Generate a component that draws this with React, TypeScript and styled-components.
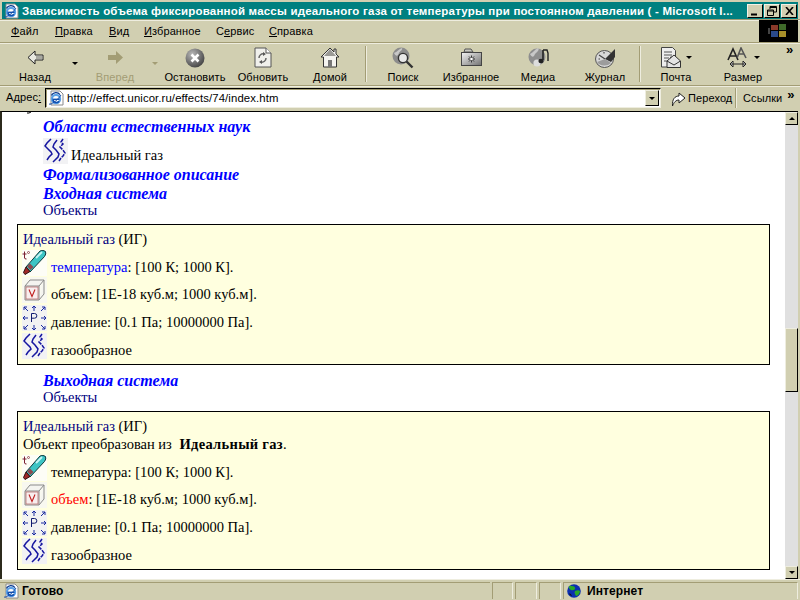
import React from 'react';
import styled, { createGlobalStyle } from 'styled-components';

const GlobalStyle = createGlobalStyle`
  html, body {
    margin: 0;
    padding: 0;
    width: 800px;
    height: 600px;
    overflow: hidden;
    background: #d1cfb1;
  }
`;

const Win = styled.div`
  width: 800px;
  height: 600px;
  display: flex;
  flex-direction: column;
  background: #d1cfb1;
  font-family: "Liberation Sans", Arial, sans-serif;
  font-size: 11px;
  letter-spacing: 0.1px;
  color: #000;
  overflow: hidden;
`;

// title bar
const TitleBar = styled.div`
  height: 17px;
  margin: 2px 2px 0;
  flex: none;
  display: flex;
  align-items: center;
  background: #008080;
  color: #fff;
`;

const TitleIcon = styled.span`
  width: 16px;
  height: 16px;
  margin: 0 3px 0 1px;
  flex: none;
  display: flex;
`;

const TitleText = styled.div`
  flex: 1;
  font-weight: bold;
  font-size: 11.5px;
  letter-spacing: 0.2px;
  white-space: nowrap;
`;

const WinButtons = styled.div`
  display: flex;
  margin-right: 1px;
`;

const WinButton = styled.div<{ $gap?: number }>`
  width: 16px;
  height: 14px;
  margin-left: ${p => p.$gap ?? 0}px;
  display: flex;
  align-items: center;
  justify-content: center;
  box-sizing: border-box;
  background: #d1cfb1;
  border: 1px solid;
  border-color: #f2f1e6 #000 #000 #f2f1e6;
`;

// menu
const MenuRow = styled.div`
  height: 24px;
  flex: none;
  display: flex;
  align-items: stretch;
  box-sizing: border-box;
  border-top: 1px solid #a39d75;
  border-bottom: 1px solid #a39d75;
  box-shadow: inset 0 1px 0 #eeeddf;
`;

const MenuItems = styled.div`
  flex: 1;
  display: flex;
  align-items: center;
  padding-left: 11px;
`;

const MenuItem = styled.span<{ $w: number }>`
  width: ${p => p.$w}px;
  white-space: nowrap;
`;

const LogoBox = styled.div`
  width: 39px;
  background: #000;
  display: flex;
  align-items: center;
  justify-content: center;
  margin-right: 2px;
`;

// toolbar
const Toolbar = styled.div`
  height: 43px;
  flex: none;
  display: flex;
  box-sizing: border-box;
  border-bottom: 1px solid #a39d75;
  box-shadow: inset 0 1px 0 #eeeddf;
`;

const ToolButton = styled.div<{ $w: number; $off?: boolean }>`
  width: ${p => p.$w}px;
  flex: none;
  display: flex;
  flex-direction: column;
  align-items: center;
  padding-top: 3px;
  color: ${p => (p.$off ? '#a39d75' : '#000')};
  white-space: nowrap;
`;

const ToolIcon = styled.div`
  height: 23px;
  display: flex;
  align-items: center;
  justify-content: center;
  gap: 5px;
  margin-bottom: 2px;
`;

const CaretSlot = styled.div<{ $off?: boolean }>`
  width: 10px;
  flex: none;
  display: flex;
  justify-content: center;
  padding-top: 19px;
  box-sizing: border-box;
  color: ${p => (p.$off ? '#a39d75' : '#000')};
`;

const Caret = styled.span<{ $color?: string }>`
  width: 0;
  height: 0;
  border-left: 3px solid transparent;
  border-right: 3px solid transparent;
  border-top: 3px solid ${p => p.$color ?? 'currentColor'};
`;

const ToolSep = styled.div`
  width: 2px;
  height: 36px;
  margin: 3px 1px 0 1px;
  flex: none;
  background: linear-gradient(to right, #a39d75 50%, #eeeddf 50%);
`;

const MoreChevrons = styled.span<{ $left: number }>`
  font-size: 13px;
  font-weight: bold;
  line-height: 10px;
  margin: 2px 0 0 ${p => p.$left}px;
  align-self: flex-start;
`;

// address
const AddressRow = styled.div`
  height: 25px;
  flex: none;
  display: flex;
  align-items: flex-start;
  box-sizing: border-box;
  padding-top: 2px;
  border-bottom: 1px solid #d1cfb1;
  box-shadow: inset 0 1px 0 #eeeddf;
`;

const AddressLabel = styled.div`
  width: 45px;
  padding: 3px 0 0 6px;
  box-sizing: border-box;
  flex: none;
`;

const UrlBox = styled.div`
  width: 616px;
  height: 20px;
  flex: none;
  display: flex;
  align-items: center;
  box-sizing: border-box;
  background: #fff;
  border: 1px solid;
  border-color: #000 #eeeddf #eeeddf #000;
  box-shadow: inset 1px 1px 0 #a39d75;
`;

const UrlIcon = styled.span`
  width: 16px;
  height: 16px;
  margin: 0 3px 0 2px;
  display: flex;
  flex: none;
`;

const UrlText = styled.div`
  flex: 1;
  font-size: 11.35px;
  white-space: nowrap;
`;

const ComboButton = styled.div`
  width: 14px;
  height: 16px;
  margin-right: 1px;
  flex: none;
  display: flex;
  align-items: center;
  justify-content: center;
  box-sizing: border-box;
  background: #d1cfb1;
  border: 1px solid;
  border-color: #eeeddf #000 #000 #eeeddf;
  color: #000;
`;

const GoButton = styled.div`
  width: 71px;
  height: 20px;
  flex: none;
  margin-left: 4px;
  display: flex;
  align-items: center;
  gap: 2px;
  padding-left: 6px;
  box-sizing: border-box;
  border-right: 1px solid #a39d75;
`;

const LinksLabel = styled.div`
  flex: 1;
  height: 20px;
  display: flex;
  align-items: center;
  padding-left: 6px;
  border-left: 1px solid #eeeddf;
`;

// document area
const Main = styled.div`
  height: 468px;
  flex: none;
  display: flex;
  box-sizing: border-box;
  border-top: 1px solid #000;
  border-left: 2px solid #2c2a1c;
  margin-right: 2px;
  background: #fff;
`;

const Page = styled.div`
  flex: 1;
  overflow: hidden;
  background: #fff;
  font-family: "Liberation Serif", "Times New Roman", serif;
  font-size: 14.5px;
  letter-spacing: 0;
  color: #000;
`;

const ClippedTail = styled.svg`
  display: block;
  margin-left: 24px;
`;

const Heading = styled.div<{ $top?: number }>`
  margin: ${p => p.$top ?? 0}px 0 0 41px;
  height: 19px;
  line-height: 19px;
  color: #0000ff;
  font-size: 16px;
  font-weight: bold;
  font-style: italic;
  white-space: nowrap;
`;

const Plain = styled.div<{ $top: number }>`
  margin: ${p => p.$top}px 0 0 41px;
  height: 17px;
  line-height: 17px;
  color: #000080;
`;

const ClassRow = styled.div`
  margin-left: 41px;
  height: 28px;
  display: flex;
  align-items: flex-end;
  gap: 3px;
`;

const ClassText = styled.span`
  height: 17px;
  line-height: 17px;
`;

const ObjectBox = styled.div<{ $top: number; $h: number }>`
  margin: ${p => p.$top}px 0 0 15px;
  width: 753px;
  height: ${p => p.$h}px;
  box-sizing: border-box;
  padding: 5px 5px 0;
  background: #ffffdf;
  border: 1px solid #000;
`;

const BoxLine = styled.div`
  height: 18px;
  line-height: 18px;
  white-space: nowrap;
`;

const Navy = styled.span`
  color: #000080;
`;

const SourceName = styled.b`
  margin-left: 4px;
  letter-spacing: 0.3px;
`;

const ParamRow = styled.div`
  height: 27.67px;
  display: flex;
  align-items: flex-end;
  gap: 4px;
  margin-left: -1px;
  white-space: nowrap;
`;

const ParamIcon = styled.span`
  width: 25px;
  height: 26px;
  flex: none;
  display: flex;
`;

const ParamText = styled.span`
  height: 17px;
  line-height: 17px;
`;

const ParamName = styled.span<{ $color?: string }>`
  color: ${p => p.$color ?? 'inherit'};
`;

// scrollbar
const Scrollbar = styled.div`
  width: 13px;
  flex: none;
  display: flex;
  flex-direction: column;
  background: #e0e0e0;
`;

const ScrollButton = styled.div`
  height: 13px;
  flex: none;
  display: flex;
  align-items: center;
  justify-content: center;
  box-sizing: border-box;
  background: #d1cfb1;
  border: 1px solid;
  border-color: #eeeddf #000 #000 #eeeddf;
`;

const ScrollUp = styled.span`
  width: 0;
  height: 0;
  border-left: 3px solid transparent;
  border-right: 3px solid transparent;
  border-bottom: 3px solid #000;
`;

const ScrollTrack = styled.div<{ $flex: number }>`
  flex: ${p => p.$flex};
`;

const ScrollThumb = styled.div`
  height: 64px;
  flex: none;
  box-sizing: border-box;
  background: #d1cfb1;
  border: 1px solid;
  border-color: #eeeddf #000 #000 #eeeddf;
`;

// status bar
const StatusBar = styled.div`
  flex: 1;
  display: flex;
  align-items: stretch;
  box-sizing: border-box;
  padding: 2px 2px 2px 0;
  border-top: 1px solid #eeeddf;
  font-size: 12px;
  font-weight: bold;
`;

const StatusMain = styled.div`
  width: 490px;
  flex: none;
  display: flex;
  align-items: center;
  gap: 3px;
  padding-left: 3px;
  box-sizing: border-box;
  border-top: 1px solid #a39d75;
`;

const StatusCell = styled.div<{ $w: number; $grow?: boolean }>`
  width: ${p => p.$w}px;
  flex: ${p => (p.$grow ? 1 : 'none')};
  margin-left: 2px;
  display: flex;
  align-items: center;
  gap: 6px;
  padding-left: 3px;
  box-sizing: border-box;
  border-top: 1px solid #a39d75;
  border-left: 1px solid #a39d75;
  border-right: 1px solid #eeeddf;
`;

// --- drawings ---
const Svg = styled.svg`
  display: block;
  flex: none;
`;

const IeIcon = () => (
  <Svg width="16" height="16" viewBox="0 0 16 16">
    <path d="M3 1h9l3 3v11H3z" fill="#fff" stroke="#8a8a8a" />
    <circle cx="8" cy="9" r="5.2" fill="#5aa0e6" />
    <circle cx="8" cy="9" r="3" fill="#fff" />
    <path d="M4.5 8.6h7v1.4h-7z" fill="#1050b0" />
    <path d="M11 11.2A3.4 3.4 0 0 1 5 10" fill="none" stroke="#1050b0" strokeWidth="1.6" />
    <path d="M3.4 5.4A5.2 5.2 0 0 1 12 4.6" fill="none" stroke="#0a3a90" strokeWidth="1.2" />
    <path d="M1 14c2 1 8-3 12-9" fill="none" stroke="#1a4fa8" strokeWidth="1" />
  </Svg>
);

const Flag = () => (
  <Svg width="24" height="18" viewBox="0 0 24 18">
    <rect x="4" y="3" width="7" height="5" fill="#8a3a2a" />
    <rect x="12" y="2" width="7" height="6" fill="#3f6a2a" />
    <rect x="4" y="9" width="7" height="6" fill="#2a4a8a" />
    <rect x="12" y="9" width="7" height="6" fill="#a8902a" />
    <rect x="1" y="6" width="2" height="6" fill="#444" />
  </Svg>
);

const BackIcon = () => (
  <Svg width="17" height="15" viewBox="0 0 17 15">
    <path d="M8 1L1 7.5 8 14v-4h8V5H8z" fill="#e8e8e0" stroke="#222" />
    <path d="M9 6h6v3H9z" fill="#a8a8a0" />
  </Svg>
);

const ForwardIcon = () => (
  <Svg width="17" height="15" viewBox="0 0 17 15">
    <path d="M9 1l7 6.5L9 14v-4H1V5h8z" fill="#a39d75" />
  </Svg>
);

const StopIcon = () => (
  <Svg width="20" height="20" viewBox="0 0 20 20">
    <defs>
      <radialGradient id="stopg" cx="35%" cy="30%" r="80%">
        <stop offset="0" stopColor="#b8b8b8" />
        <stop offset="1" stopColor="#3c3c3c" />
      </radialGradient>
    </defs>
    <circle cx="10" cy="10" r="9.5" fill="url(#stopg)" />
    <path d="M6.5 6.5l7 7M13.5 6.5l-7 7" stroke="#fff" strokeWidth="2.6" />
  </Svg>
);

const RefreshIcon = () => (
  <Svg width="18" height="21" viewBox="0 0 18 21">
    <path d="M1 1h11l5 5v14H1z" fill="#f0f0ec" stroke="#555" />
    <path d="M12 1v5h5" fill="#fff" stroke="#555" />
    <path d="M5 11a4 4 0 0 1 5-4" fill="none" stroke="#666" strokeWidth="1.5" />
    <path d="M9 5l3 2-3 2z" fill="#555" />
    <path d="M12 11a4 4 0 0 1-5 4" fill="none" stroke="#666" strokeWidth="1.5" />
    <path d="M8 13l-3 2 3 2z" fill="#555" />
  </Svg>
);

const HomeIcon = () => (
  <Svg width="20" height="21" viewBox="0 0 20 21">
    <path d="M10 1L1 10h2.5v10h13V10H19l-3-3V2h-2v3z" fill="#f4f4f0" stroke="#333" />
    <path d="M10 2l6 7H4z" fill="#9a9a96" />
    <rect x="8" y="13" width="4" height="7" fill="#777" />
  </Svg>
);

const SearchIcon = () => (
  <Svg width="22" height="22" viewBox="0 0 22 22">
    <circle cx="9" cy="9" r="8.5" fill="#8c8c8c" />
    <path d="M2 6c3-1 5-4 8-5 1 2-2 3-3 5-1 3-3 4-5 0zM14 10l3 4-4 2z" fill="#c8c8c8" />
    <circle cx="11" cy="11" r="4.6" fill="#e8e8e8" stroke="#333" strokeWidth="1.4" />
    <path d="M14.5 14.5l6 6" stroke="#333" strokeWidth="2.4" />
  </Svg>
);

const FavoritesIcon = () => (
  <Svg width="21" height="19" viewBox="0 0 21 19">
    <defs>
      <linearGradient id="favg" x1="0" y1="0" x2="1" y2="1">
        <stop offset="0" stopColor="#f4f4f4" />
        <stop offset="1" stopColor="#707070" />
      </linearGradient>
    </defs>
    <path d="M3 4l1-3h6l2 3z" fill="#c8c8c0" stroke="#555" />
    <rect x="0.5" y="4.5" width="20" height="13" fill="url(#favg)" stroke="#444" />
    <path d="M10.5 7.500v7M7 11h7M8 8.500l5 5M13 8.500l-5 5" stroke="#333" />
    <circle cx="10.5" cy="11" r="1.3" fill="#fff" />
  </Svg>
);

const MediaIcon = () => (
  <Svg width="21" height="21" viewBox="0 0 21 21">
    <circle cx="9" cy="10" r="8.5" fill="#8e8e8e" />
    <path d="M2 7c3-1 5-5 8-6 2 2-1 4-3 6-1 3-3 4-5 0z" fill="#c8c8c8" />
    <circle cx="9" cy="16" r="3.6" fill="#ddd" />
    <path d="M15 3h4l1 3v8" fill="none" stroke="#222" strokeWidth="1.4" />
    <path d="M15 3v10" stroke="#222" strokeWidth="1.6" />
    <ellipse cx="13" cy="14" rx="2.6" ry="2.2" fill="#222" />
  </Svg>
);

const JournalIcon = () => (
  <Svg width="21" height="20" viewBox="0 0 21 20">
    <ellipse cx="9.5" cy="11" rx="9" ry="8.5" fill="#d8d8d8" stroke="#555" />
    <path d="M10 11L20 1v8l-4 5z" fill="#333" />
    <path d="M10 11L4 7M9 4v1.5M3.5 11H5M9 17v-1.5" stroke="#444" strokeWidth="1.2" />
    <path d="M2 14a9 8 0 0 0 14 1l-6-4z" fill="#9c9c9c" />
  </Svg>
);

const MailIcon = () => (
  <Svg width="20" height="21" viewBox="0 0 20 21">
    <path d="M0.5 0.5h11l3 3V10h-5v10h-9z" fill="#eee" stroke="#444" />
    <path d="M3 5h8M3 8h8M3 11h5M3 14h4" stroke="#555" />
    <path d="M6 14l7-6 6.5 6v6.5H6z" fill="#e4e4e4" stroke="#333" />
    <path d="M6 14l7 4 6.5-4" fill="none" stroke="#333" />
  </Svg>
);

const SizeIcon = () => (
  <Svg width="22" height="21" viewBox="0 0 22 21">
    <path d="M1 13L6 2l5 11M3 9h6" fill="none" stroke="#222" strokeWidth="1.6" />
    <path d="M10 11l4-10 5 10M12 7h5" fill="none" stroke="#555" strokeWidth="1.6" />
    <path d="M3 17h16M3 17l3-3v6zM19 17l-3-3v6z" fill="#fff" stroke="#222" />
  </Svg>
);

const GoIcon = () => (
  <Svg width="15" height="17" viewBox="0 0 15 17">
    <path d="M1.5 16C1 9 4 6 8 6V3l6 5-6 5v-3c-3 0-5 2-6.5 6z" fill="#fff" stroke="#222" />
  </Svg>
);

const MiniX = () => (
  <Svg width="9" height="8" viewBox="0 0 9 8">
    <path d="M1 0l7 8M8 0L1 8" stroke="#000" strokeWidth="1.6" fill="none" />
  </Svg>
);

const MiniRestore = () => (
  <Svg width="10" height="10" viewBox="0 0 10 10">
    <path d="M3 3V.5h6.5V6H7M3 1.5h6.5" fill="none" stroke="#000" />
    <path d="M.5 4h6v5.5h-6zM.5 5h6" fill="none" stroke="#000" />
  </Svg>
);

const MiniMin = () => (
  <Svg width="10" height="10" viewBox="0 0 10 10">
    <rect x="1" y="7.5" width="6" height="2" fill="#000" />
  </Svg>
);

const GlobeIcon = () => (
  <Svg width="14" height="14" viewBox="0 0 14 14">
    <circle cx="7" cy="7" r="6.8" fill="#0b2fb0" />
    <path d="M3 1.5c2 1 4 0 5 2S6 7 4 6 1 3 3 1.5zM8 7c2-1 4-1 5 0 0 3-3 5-4 5-1-2-2-3-1-5z" fill="#28a828" />
    <path d="M2 10c1-1 2 0 3 2-1 0-2-1-3-2z" fill="#111" />
  </Svg>
);

const ThermoIcon = () => (
  <Svg width="25" height="26" viewBox="0 0 25 26">
    <rect width="25" height="26" fill="#fdfdf6" />
    <path d="M0.5 4h4M2.5 1.500V8q0 1 2 1" fill="none" stroke="#7a2030" strokeWidth="1" />
    <circle cx="6.5" cy="2.5" r="1" fill="none" stroke="#7a2030" strokeWidth="0.7" />
    <path d="M4 17L18 1q3-1.500 5.500 0.500 1 2.500-1 5L8 22z" fill="#3cc4c4" stroke="#0f3a3a" />
    <path d="M14 8l6-6" stroke="#c4f4f4" strokeWidth="1.8" />
    <path d="M1.500 22.500l2.500-5.500 4 4.500-5 3z" fill="#a02828" stroke="#301010" />
    <path d="M5 16.500l3.500 3.500 3-3-3.500-3.500z" fill="#8c4a50" />
  </Svg>
);

const CubeIcon = () => (
  <Svg width="25" height="26" viewBox="0 0 25 26">
    <rect width="25" height="26" fill="#f8f8f0" />
    <path d="M3 9h14v14H3zM3 9l5-6h14l-5 6M22 3v14l-5 6" fill="#f4f4f0" stroke="#8a8a8a" />
    <rect x="4" y="10" width="12" height="12" fill="#f8eeee" stroke="#b06060" strokeWidth="0.7" />
    <path d="M7 12.5l3 7 3-7" fill="none" stroke="#c02020" strokeWidth="1.1" />
  </Svg>
);

const PressureIcon = () => (
  <Svg width="25" height="26" viewBox="0 0 25 26">
    <rect width="25" height="26" fill="#f2f2f2" />
    <g fill="none" stroke="#1a2aa0" strokeWidth="1">
      <path d="M2 2l4 4M2 2h3M2 2v3" />
      <path d="M12 1v5M12 1l-2 2M12 1l2 2" />
      <path d="M23 2l-4 4M23 2h-3M23 2v3" />
      <path d="M1 13h5M1 13l2-2M1 13l2 2" />
      <path d="M24 13h-5M24 13l-2-2M24 13l-2 2" />
      <path d="M2 24l4-4M2 24h3M2 24v-3" />
      <path d="M12 25v-5M12 25l-2-2M12 25l2-2" />
      <path d="M23 24l-4-4M23 24h-3M23 24v-3" />
      <path d="M9.500 17V8.500h3a2.300 2.300 0 0 1 0 4.700h-3" stroke="#101a70" />
    </g>
  </Svg>
);

const SteamIcon = () => (
  <Svg width="25" height="26" viewBox="0 0 25 26">
    <rect width="25" height="26" fill="#f2f2f4" />
    <g fill="none" stroke="#1616a0" strokeWidth="1.5">
      <path d="M8 1L4 5 2 8l3 3 3 3 1 2-3 3-2 3" />
      <path d="M14 2l-3 4-1 3 3 3 3 4-1 3-3 3-2 2" />
      <path d="M20 1l-2 3 2 2-3 3 3 3 2 3-2 3-2 2-2 3" strokeDasharray="4 1" />
    </g>
  </Svg>
);

const Params = ({ highlight }: { highlight: 'temp' | 'vol' }) => (
  <>
    <ParamRow>
      <ParamIcon><ThermoIcon /></ParamIcon>
      <ParamText>
        <ParamName $color={highlight === 'temp' ? '#0000ff' : undefined}>температура</ParamName>: [100 К; 1000 К].
      </ParamText>
    </ParamRow>
    <ParamRow>
      <ParamIcon><CubeIcon /></ParamIcon>
      <ParamText>
        <ParamName $color={highlight === 'vol' ? '#ff0000' : undefined}>объем</ParamName>: [1E-18 куб.м; 1000 куб.м].
      </ParamText>
    </ParamRow>
    <ParamRow>
      <ParamIcon><PressureIcon /></ParamIcon>
      <ParamText>давление: [0.1 Па; 10000000 Па].</ParamText>
    </ParamRow>
    <ParamRow>
      <ParamIcon><SteamIcon /></ParamIcon>
      <ParamText>газообразное</ParamText>
    </ParamRow>
  </>
);

const menu: [React.ReactNode, number][] = [
  [<><u>Ф</u>айл</>, 44],
  [<><u>П</u>равка</>, 54],
  [<><u>В</u>ид</>, 35],
  [<><u>И</u>збранное</>, 72],
  [<>С<u>е</u>рвис</>, 53],
  [<><u>С</u>правка</>, 60],
];

export default function App() {
  return (
    <Win>
      <GlobalStyle />
      <TitleBar>
        <TitleIcon><IeIcon /></TitleIcon>
        <TitleText>Зависимость объема фиксированной массы идеального газа от температуры при постоянном давлении ( - Microsoft I...</TitleText>
        <WinButtons>
          <WinButton><MiniMin /></WinButton>
          <WinButton $gap={1}><MiniRestore /></WinButton>
          <WinButton $gap={1}><MiniX /></WinButton>
        </WinButtons>
      </TitleBar>

      <MenuRow>
        <MenuItems>
          {menu.map(([label, w], i) => (
            <MenuItem key={i} $w={w}>{label}</MenuItem>
          ))}
        </MenuItems>
        <LogoBox><Flag /></LogoBox>
      </MenuRow>

      <Toolbar>
        <ToolButton $w={70}><ToolIcon><BackIcon /></ToolIcon>Назад</ToolButton>
        <CaretSlot><Caret /></CaretSlot>
        <ToolButton $w={70} $off><ToolIcon><ForwardIcon /></ToolIcon>Вперед</ToolButton>
        <CaretSlot $off><Caret /></CaretSlot>
        <ToolButton $w={70}><ToolIcon><StopIcon /></ToolIcon>Остановить</ToolButton>
        <ToolButton $w={66}><ToolIcon><RefreshIcon /></ToolIcon>Обновить</ToolButton>
        <ToolButton $w={68}><ToolIcon><HomeIcon /></ToolIcon>Домой</ToolButton>
        <ToolSep />
        <ToolButton $w={70}><ToolIcon><SearchIcon /></ToolIcon>Поиск</ToolButton>
        <ToolButton $w={66}><ToolIcon><FavoritesIcon /></ToolIcon>Избранное</ToolButton>
        <ToolButton $w={68}><ToolIcon><MediaIcon /></ToolIcon>Медиа</ToolButton>
        <ToolButton $w={66}><ToolIcon><JournalIcon /></ToolIcon>Журнал</ToolButton>
        <ToolSep />
        <ToolButton $w={68}><ToolIcon><MailIcon /><Caret /></ToolIcon>Почта</ToolButton>
        <ToolButton $w={66}><ToolIcon><SizeIcon /><Caret /></ToolIcon>Размер</ToolButton>
        <MoreChevrons $left={10}>»</MoreChevrons>
      </Toolbar>

      <AddressRow>
        <AddressLabel>Адрес<u>:</u></AddressLabel>
        <UrlBox>
          <UrlIcon><IeIcon /></UrlIcon>
          <UrlText>http://effect.unicor.ru/effects/74/index.htm</UrlText>
          <ComboButton><Caret /></ComboButton>
        </UrlBox>
        <GoButton><GoIcon />Переход</GoButton>
        <LinksLabel>Ссылки<MoreChevrons $left={5}>»</MoreChevrons></LinksLabel>
      </AddressRow>

      <Main>
        <Page>
          <ClippedTail width="6" height="2" viewBox="0 0 6 2">
            <path d="M1 1h2l2-1" fill="none" stroke="#000" />
          </ClippedTail>
          <Heading $top={3}>Области естественных наук</Heading>
          <ClassRow>
            <ParamIcon><SteamIcon /></ParamIcon>
            <ClassText>Идеальный газ</ClassText>
          </ClassRow>
          <Heading $top={1}>Формализованное описание</Heading>
          <Heading>Входная система</Heading>
          <Plain $top={-1}>Объекты</Plain>
          <ObjectBox $top={5} $h={141}>
            <BoxLine><Navy>Идеальный газ</Navy> (ИГ)</BoxLine>
            <Params highlight="temp" />
          </ObjectBox>
          <Heading $top={6}>Выходная система</Heading>
          <Plain $top={-1}>Объекты</Plain>
          <ObjectBox $top={5} $h={159}>
            <BoxLine><Navy>Идеальный газ</Navy> (ИГ)</BoxLine>
            <BoxLine>Объект преобразован из <SourceName>Идеальный газ</SourceName>.</BoxLine>
            <Params highlight="vol" />
          </ObjectBox>
        </Page>
        <Scrollbar>
          <ScrollButton><ScrollUp /></ScrollButton>
          <ScrollTrack $flex={203} />
          <ScrollThumb />
          <ScrollTrack $flex={174} />
          <ScrollButton><Caret $color="#000" /></ScrollButton>
        </Scrollbar>
      </Main>

      <StatusBar>
        <StatusMain><IeIcon />Готово</StatusMain>
        <StatusCell $w={21} />
        <StatusCell $w={22} />
        <StatusCell $w={22} />
        <StatusCell $w={0} $grow><GlobeIcon />Интернет</StatusCell>
      </StatusBar>
    </Win>
  );
}
